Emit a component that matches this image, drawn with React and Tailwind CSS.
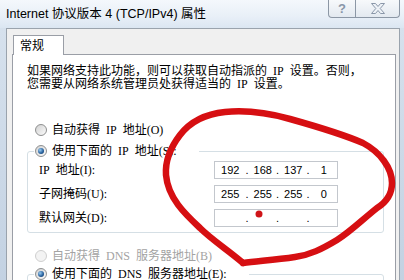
import clsx from 'clsx'

const bodyFont = "font-['Liberation_Serif','Noto_Sans_CJK_SC',serif]"

// SimSun 的半角空格比 Times 宽，用 en space 代替
const sp = '\u2002'

const Radio = ({ checked, disabled }) => (
  <span
    className={clsx(
      'flex h-[12px] w-[12px] shrink-0 items-center justify-center rounded-full border',
      disabled
        ? 'border-[#cfcfcf] bg-[#f3f3f3]'
        : 'border-[#8e8f8f] bg-[linear-gradient(135deg,#d2d2d2,#fbfbfb)]'
    )}
  >
    {checked && (
      <span className="h-[6px] w-[6px] rounded-full bg-[radial-gradient(circle_at_35%_35%,#9ccdf2,#2a64a0_55%,#0d2f57)]" />
    )}
  </span>
)

const RadioRow = ({ label, checked, disabled, className }) => (
  <div
    className={clsx(
      'flex h-[16px] items-center gap-[5px] whitespace-nowrap text-[12px] leading-[16px]',
      disabled ? 'text-[#a3a3a3]' : 'text-black',
      className
    )}
  >
    <Radio checked={checked} disabled={disabled} />
    <span>{label}</span>
  </div>
)

const IpBox = ({ parts }) => (
  <div className="flex h-[18px] w-[124px] items-center border border-[#c3c7cd] bg-white font-['Liberation_Sans',sans-serif] text-[11px] leading-[16px] text-black">
    {parts.map((p, i) => (
      <div key={i} className="flex flex-1 items-center">
        {i > 0 && <span className="w-[4px]">.</span>}
        <span className="flex-1 text-center">{p}</span>
      </div>
    ))}
  </div>
)

const TitleBar = () => (
  <div className="flex h-[29px] justify-between bg-[linear-gradient(180deg,#f4f8fc,#e8eff7_60%,#dbe6f2)] pl-[6px] pr-[4px]">
    <span className="font-['Liberation_Sans','Noto_Sans_CJK_SC',sans-serif] text-[12.5px] leading-[28px] text-black">
      Internet 协议版本 4 (TCP/IPv4) 属性
    </span>
    <div className="flex h-[18px]">
      <div className="flex w-[28px] items-center justify-center rounded-bl-[4px] border border-t-0 border-[#8c97a5] bg-[linear-gradient(180deg,#f7f9fb,#e3e9f0)] font-['Liberation_Sans',sans-serif] text-[13px] font-bold text-[#8896a8]">
        ?
      </div>
      <div className="flex w-[44px] items-center justify-center rounded-br-[4px] border border-l-0 border-t-0 border-[#8c97a5] bg-[linear-gradient(180deg,#f7f9fb,#e3e9f0)]">
        <svg width="14" height="11" viewBox="0 0 14 11">
          <polygon
            points="0.5,0.5 4.5,0.5 7,3.5 9.5,0.5 13.5,0.5 9.2,5.5 13.5,10.5 9.5,10.5 7,7.5 4.5,10.5 0.5,10.5 4.8,5.5"
            fill="#eef2f7"
            stroke="#8a97a9"
          />
        </svg>
      </div>
    </div>
  </div>
)

const Annotation = () => (
  <svg className="pointer-events-none absolute left-0 top-0" width="404" height="280" viewBox="0 0 404 280">
    <path
      d="M243,263 C228,250 212,240 200,228 C185,214 168,198 166,175 C165,160 170,148 180,135 C190,122 205,114 225,112 C245,110 265,112 290,119 C315,126 340,133 363,143 C380,152 392,168 392,183 C392,196 385,203 377,208 C362,220 350,232 337,240 C322,249 310,255 295,257 C275,260 258,261 243,263"
      fill="none"
      stroke="#d60f12"
      strokeWidth="6.5"
      strokeLinejoin="round"
      strokeLinecap="round"
    />
    <circle cx="259" cy="214" r="3.5" fill="#cf1418" />
  </svg>
)

export default function App() {
  return (
    <div className="relative flex h-[280px] w-[404px] flex-col overflow-hidden bg-[#cad8e7]">
      <TitleBar />
      <div className="flex flex-1">
        <div className="w-[6px] bg-[linear-gradient(180deg,#d6e1ed,#c1d0e1)]" />
        <div className="flex flex-1 flex-col border-l border-r border-t border-[#9aa3ad] bg-[#f0f0f0] pl-[5px] pr-[3px] pt-[6px]">
          <div className={clsx('relative z-10 -mb-px ml-px flex h-[20px] w-[51px] items-center border border-b-0 border-[#9a9ea6] bg-white pl-[6px] text-[12px] leading-[16px] text-black', bodyFont)}>
            常规
          </div>
          <div className={clsx('flex-1 border border-[#9a9ea6] bg-white pl-[14px] pt-[10px]', bodyFont)}>
            <div className="whitespace-nowrap text-[12px] leading-[13px] text-black">
              <div>如果网络支持此功能，则可以获取自动指派的{sp}IP{sp}设置。否则，</div>
              <div>您需要从网络系统管理员处获得适当的{sp}IP{sp}设置。</div>
            </div>

            <RadioRow className="ml-[8px] mt-[31px]" label={`自动获得${sp}IP${sp}地址(O)`} />

            <fieldset className="mt-[5px] w-[357px] rounded-[3px] border border-[#d5dfe5] pb-[5px] pt-[2px]">
              <legend className="ml-[6px] pl-[1px] pr-[22px]">
                <RadioRow checked label={`使用下面的${sp}IP${sp}地址(S):`} />
              </legend>
              <div className="flex flex-col gap-[6px] pl-[11px] text-[12px] leading-[16px] text-black">
                <div className="flex items-center">
                  <span className="w-[175px]">IP{sp}地址(I):</span>
                  <IpBox parts={['192', '168', '137', '1']} />
                </div>
                <div className="flex items-center">
                  <span className="w-[175px]">子网掩码(U):</span>
                  <IpBox parts={['255', '255', '255', '0']} />
                </div>
                <div className="flex items-center">
                  <span className="w-[175px]">默认网关(D):</span>
                  <IpBox parts={['', '', '', '']} />
                </div>
              </div>
            </fieldset>

            <RadioRow className="ml-[8px] mt-[15px]" disabled label={`自动获得${sp}DNS${sp}服务器地址(B)`} />

            <fieldset className="mt-[2px] h-[40px] w-[357px] rounded-[3px] border border-[#d5dfe5]">
              <legend className="ml-[6px] pl-[1px] pr-[22px]">
                <RadioRow checked label={`使用下面的${sp}DNS${sp}服务器地址(E):`} />
              </legend>
            </fieldset>
          </div>
        </div>
        <div className="w-[4px] bg-[linear-gradient(180deg,#d6e1ed,#c1d0e1)]" />
      </div>
      <Annotation />
    </div>
  )
}
